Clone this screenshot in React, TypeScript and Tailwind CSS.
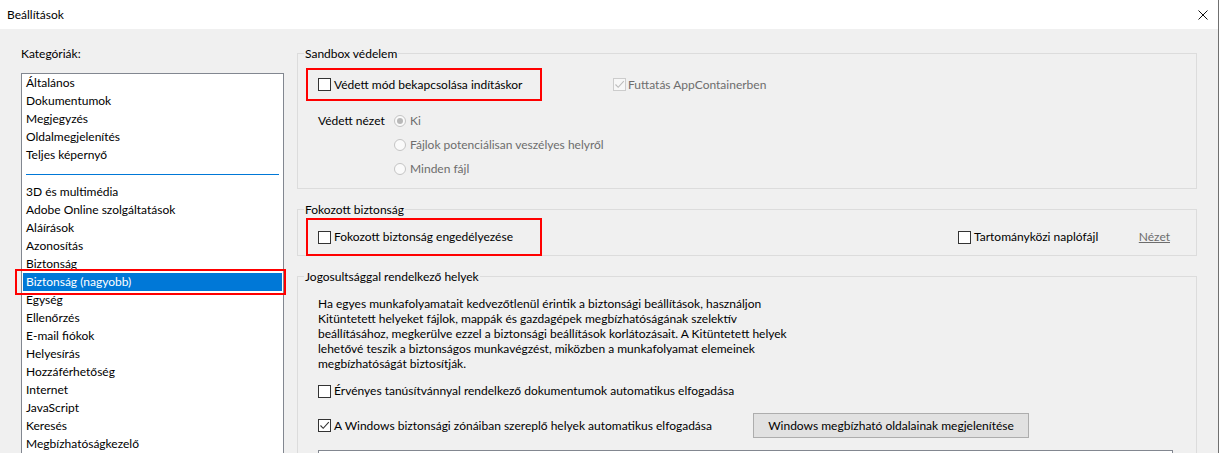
import type { ReactNode } from "react"

const CATEGORIES_TOP = [
  "Általános",
  "Dokumentumok",
  "Megjegyzés",
  "Oldalmegjelenítés",
  "Teljes képernyő",
]

const CATEGORIES = [
  "3D és multimédia",
  "Adobe Online szolgáltatások",
  "Aláírások",
  "Azonosítás",
  "Biztonság",
  "Biztonság (nagyobb)",
  "Egység",
  "Ellenőrzés",
  "E-mail fiókok",
  "Helyesírás",
  "Hozzáférhetőség",
  "Internet",
  "JavaScript",
  "Keresés",
  "Megbízhatóságkezelő",
]

const SELECTED = "Biztonság (nagyobb)"

function CheckBox({ checked = false, disabled = false }: { checked?: boolean; disabled?: boolean }) {
  const stroke = disabled ? "#bcbcbc" : "#333333"
  return (
    <span
      className={
        disabled
          ? "inline-flex h-[13px] w-[13px] shrink-0 items-center justify-center border border-[#cccccc] bg-[#f7f7f7]"
          : "inline-flex h-[13px] w-[13px] shrink-0 items-center justify-center border border-[#333333] bg-white"
      }
    >
      {checked && (
        <svg viewBox="0 0 11 11" className="h-[11px] w-[11px]">
          <path d="M1.5 5.5 L4.2 8.3 L9.8 2.2" fill="none" stroke={stroke} strokeWidth="1.1" />
        </svg>
      )}
    </span>
  )
}

function Radio({ checked = false }: { checked?: boolean }) {
  return (
    <span className="inline-flex h-[12px] w-[12px] shrink-0 items-center justify-center rounded-full border border-[#c4c4c4] bg-[#fafafa]">
      {checked && <span className="h-[6px] w-[6px] rounded-full bg-[#b8b8b8]" />}
    </span>
  )
}

function GroupBox({ label, className, children }: { label: string; className: string; children: ReactNode }) {
  return (
    <div className={"relative border border-[#dcdcdc] " + className}>
      <span className="absolute -top-[8px] left-[6px] bg-[#f0f0f0] px-[1px] leading-[16px]">{label}</span>
      {children}
    </div>
  )
}

export default function App() {
  return (
    <div
      className="flex h-[453px] w-[1219px] flex-col overflow-hidden border-r border-[#707070] bg-[#f0f0f0] text-[12px] text-black"
      style={{ fontFamily: "Lato, 'Noto Sans', sans-serif" }}
    >
      <header className="flex h-[29px] shrink-0 items-center justify-between bg-white pl-[7px] pr-[10px]">
        <span>Beállítások</span>
        <svg viewBox="0 0 10 10" className="h-[10px] w-[10px]">
          <path d="M0.5 0.5 L9.5 9.5 M9.5 0.5 L0.5 9.5" stroke="#111" strokeWidth="1" />
        </svg>
      </header>

      <div className="flex flex-1 pl-[21px]">
        {/* categories */}
        <div className="flex w-[263px] flex-col pt-[17px]">
          <div className="h-[16px] leading-[16px]">Kategóriák:</div>
          <div className="mt-[11px] flex-1 border border-[#828790] bg-white">
            {CATEGORIES_TOP.map((c) => (
              <div key={c} className="h-[18px] pl-[4px] leading-[18px]">
                {c}
              </div>
            ))}
            <div className="mx-[4px] mb-[8px] mt-[10px] h-px bg-[#0078d7]" />
            {CATEGORIES.map((c) =>
              c === SELECTED ? (
                <div key={c} className="relative mx-[1px] h-[18px] bg-[#0078d7] pl-[3px] leading-[18px] text-white">
                  {c}
                  <span className="absolute -bottom-[4px] -left-[8px] -right-[4px] -top-[4px] border-2 border-[#ff0000]" />
                </div>
              ) : (
                <div key={c} className="h-[18px] pl-[4px] leading-[18px]">
                  {c}
                </div>
              ),
            )}
          </div>
        </div>

        {/* settings */}
        <div className="ml-[13px] flex w-[900px] flex-col pt-[24px]">
          <GroupBox label="Sandbox védelem" className="h-[136px] pl-[8px] pt-[14px]">
            <div className="flex items-center">
              <div className="flex h-[33px] w-[236px] items-center gap-[3px] border-2 border-[#ff0000] pl-[10px]">
                <CheckBox />
                <span>Védett mód bekapcsolása indításkor</span>
              </div>
              <div className="ml-[71px] flex items-center gap-[2px] text-[#6d6d6d]">
                <CheckBox checked disabled />
                <span>Futtatás AppContainerben</span>
              </div>
            </div>
            <div className="mt-[7px] flex pl-[12px]">
              <div className="flex h-[25px] w-[76px] items-center">Védett nézet</div>
              <div className="flex flex-col text-[#6d6d6d]">
                <div className="flex h-[25px] items-center gap-[4px]">
                  <Radio checked />
                  <span>Ki</span>
                </div>
                <div className="flex h-[24px] items-center gap-[4px]">
                  <Radio />
                  <span>Fájlok potenciálisan veszélyes helyről</span>
                </div>
                <div className="flex h-[24px] items-center gap-[4px]">
                  <Radio />
                  <span>Minden fájl</span>
                </div>
              </div>
            </div>
          </GroupBox>

          <GroupBox label="Fokozott biztonság" className="mt-[20px] h-[47px] pl-[8px] pt-[8px]">
            <div className="flex items-center">
              <div className="flex h-[38px] w-[236px] items-center gap-[3px] border-2 border-[#ff0000] pl-[10px]">
                <CheckBox />
                <span>Fokozott biztonság engedélyezése</span>
              </div>
              <div className="ml-[416px] flex items-center gap-[3px]">
                <CheckBox />
                <span>Tartományközi naplófájl</span>
              </div>
              <span className="ml-auto mr-[26px] text-[#6d6d6d] underline">Nézet</span>
            </div>
          </GroupBox>

          <GroupBox label="Jogosultsággal rendelkező helyek" className="mt-[20px] h-[200px] pl-[20px] pt-[19px]">
            <p className="leading-[15px]">
              Ha egyes munkafolyamatait kedvezőtlenül érintik a biztonsági beállítások, használjon
              <br />
              Kitüntetett helyeket fájlok, mappák és gazdagépek megbízhatóságának szelektív
              <br />
              beállításához, megkerülve ezzel a biztonsági beállítások korlátozásait. A Kitüntetett helyek
              <br />
              lehetővé teszik a biztonságos munkavégzést, miközben a munkafolyamat elemeinek
              <br />
              megbízhatóságát biztosítják.
            </p>
            <div className="mt-[10px] flex h-[20px] items-center gap-[3px]">
              <CheckBox />
              <span>Érvényes tanúsítvánnyal rendelkező dokumentumok automatikus elfogadása</span>
            </div>
            <div className="mt-[12px] flex h-[25px] items-center">
              <div className="flex w-[435px] items-center gap-[3px]">
                <CheckBox checked />
                <span>A Windows biztonsági zónáiban szereplő helyek automatikus elfogadása</span>
              </div>
              <button className="flex h-[25px] w-[276px] items-center justify-center border border-[#adadad] bg-[#e1e1e1]">
                Windows megbízható oldalainak megjelenítése
              </button>
            </div>
            <div className="mt-[12px] h-[40px] w-[855px] border border-[#828790] bg-white" />
          </GroupBox>
        </div>
      </div>
    </div>
  )
}
